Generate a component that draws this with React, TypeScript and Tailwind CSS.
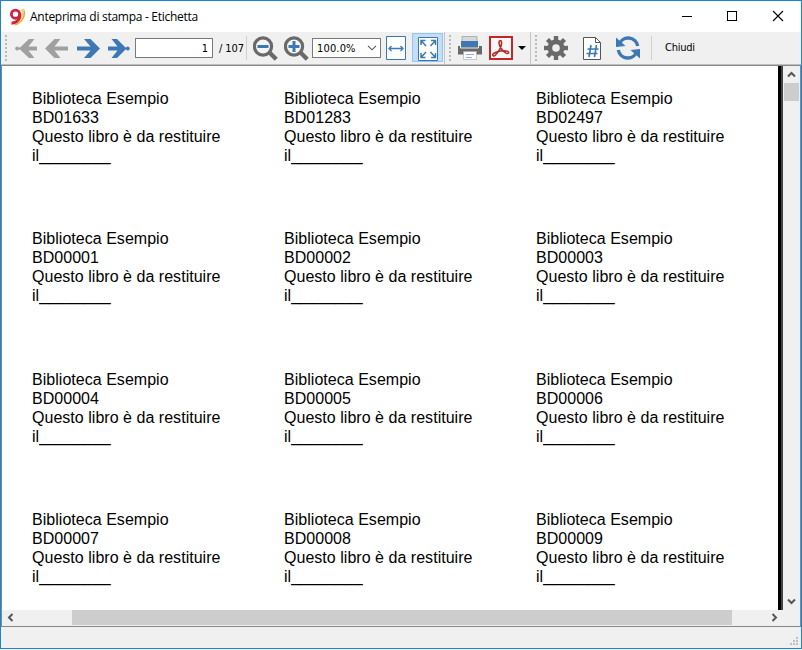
import React from "react";

const codes = [
  ["BD01633", "BD01283", "BD02497"],
  ["BD00001", "BD00002", "BD00003"],
  ["BD00004", "BD00005", "BD00006"],
  ["BD00007", "BD00008", "BD00009"],
];
const rowHeights = ["h-[140px]", "h-[141px]", "h-[140px]", "h-[100px]"];

function Icon({ x, w, y = 34, h = 28, children, className = "" }: { x: number; w: number; y?: number; h?: number; children: React.ReactNode; className?: string }) {
  return (
    <svg width={w} height={h} viewBox={`${x} ${y} ${w} ${h}`} className={`shrink-0 ${className}`}>
      {children}
    </svg>
  );
}

function Grip() {
  return (
    <div className="flex h-[28px] w-[3px] shrink-0 flex-col gap-[2px] pt-px">
      {[0, 1, 2, 3, 4, 5, 6].map((i) => (
        <div key={i} className="h-[2px] w-[2px] bg-[#bababa]" />
      ))}
    </div>
  );
}

function Lens({ x, plus }: { x: number; plus?: boolean }) {
  return (
    <Icon x={x} w={25}>
      <circle cx={x + 10} cy="46.5" r="8.6" fill="#f5f5f5" stroke="#696969" strokeWidth="3.2" />
      <path d={`M${x + 17} 53l4.700 4.700`} stroke="#696969" strokeWidth="4.300" strokeLinecap="square" />
      <path d={`M${x + 4.5} 46.5h11`} stroke="#3c78b4" strokeWidth="3" />
      {plus && <path d={`M${x + 10} 41v11`} stroke="#3c78b4" strokeWidth="3" />}
    </Icon>
  );
}

function TitleBar() {
  return (
    <div className="flex h-[31px] shrink-0 items-center bg-white font-['Open_Sans','Noto_Sans',sans-serif] text-[12px] text-black">
      <Icon x={8} y={6} w={19} h={18} className="ml-[7px]">
        <path d="M22.5 7C25.5 14 21 20.500 14 22" fill="none" stroke="#f1d875" strokeWidth="3.6" />
        <path d="M24.300 9C25 15 21.500 20.500 15.500 22.700" fill="none" stroke="#b39a45" strokeWidth=".8" />
        <circle cx="15.500" cy="12.200" r="4.100" fill="#fff" stroke="#d5203e" strokeWidth="2.800" />
        <path d="M19.700 11.500C20.500 16.500 17.500 20.700 11.500 21.200" fill="none" stroke="#d5203e" strokeWidth="2.900" />
      </Icon>
      <span className="ml-[3px] w-[220px] whitespace-nowrap tracking-[-0.28px]">Anteprima di stampa - Etichetta</span>
      <Icon x={680} y={8} w={110} h={16} className="ml-auto mr-[11px]">
        <g fill="none" stroke="#000">
          <path d="M682 15.500h10M727.500 10.500h9v9h-9z" shapeRendering="crispEdges" />
          <path d="M773 10l10 10M783 10l-10 10" strokeWidth="1.100" />
        </g>
      </Icon>
    </div>
  );
}

function Toolbar() {
  return (
    <div className="flex h-[32px] shrink-0 items-center bg-[#f0f0f0] font-['DejaVu_Sans_Condensed','DejaVu_Sans',sans-serif] text-[11px] text-black">
      <div className="ml-[4px] flex"><Grip /></div>
      <Icon x={15} w={22} className="ml-[7px]">
        <path d="M37 46.500H28.500L34.500 39H29L20 47.500h-1.200a1.900 1.900 0 1 0 0 2H20L29 58h5.500l-6-7.500H37z" fill="#a0a0a0" />
      </Icon>
      <Icon x={45} w={24} className="ml-[8px]">
        <path d="M68 46.500H54.500l6-7.500h-6L45 48.500 54.500 58h6l-6-7.500H68z" fill="#a0a0a0" />
      </Icon>
      <Icon x={77} w={24} className="ml-[8px]">
        <path d="M77 46.500H90.500L84 39h6.500L100 48.500 90.500 58H84l6.500-7.500H77z" fill="#3c78b4" />
      </Icon>
      <Icon x={108} w={23} className="ml-[7px]">
        <path d="M108 46.500h9.500L111.500 39h5.500l8.500 8.500h.7a1.900 1.900 0 1 1 0 2h-.7L117 58h-5.500l6-7.500H108z" fill="#3c78b4" />
      </Icon>
      <div className="ml-[4px] flex h-[20px] w-[78px] items-center justify-end border border-[#7a7a7a] bg-white pr-[4px] pt-[2px]">1</div>
      <div className="ml-[6px] w-[26px] whitespace-nowrap pt-[2px] tracking-[-0.1px]">/ 107</div>
      <div className="ml-[1px] h-[24px] w-px bg-[#d0d0d0]" />
      <div className="ml-[6px] flex"><Lens x={253} /></div>
      <div className="ml-[6px] flex"><Lens x={284} plus /></div>
      <div className="ml-[3px] flex h-[20px] w-[69px] items-center justify-between border border-[#7a7a7a] bg-white pl-[4px] pr-[3px]">
        <span className="pt-[2px] tracking-[0.15px]">100.0%</span>
        <svg width="10" height="6" viewBox="0 0 10 6"><path d="M1 .8l4 4 4-4" fill="none" stroke="#555" strokeWidth="1.100" /></svg>
      </div>
      <Icon x={386} w={20} className="ml-[5px]">
        <path d="M386.500 36.500h19v23h-19z" fill="#fff" stroke="#3c78b4" />
        <path d="M389 48.500h14M391.500 46l-2.500 2.500 2.500 2.500M400.500 46l2.500 2.500-2.500 2.500" fill="none" stroke="#3c78b4" strokeWidth="1.300" />
      </Icon>
      <Icon x={412} y={33} w={31} h={30} className="ml-[6px]">
        <path d="M412.500 33.500h30v28h-30z" fill="#c3def5" stroke="#91c6f4" />
        <path d="M418.500 37.500h19v23h-19z" fill="#fff" stroke="#3c78b4" />
        <path d="M421 45v-4.500h4.500M421 40.500l5 5.500M431 40.500h4.500V45M435.500 40.500l-5 5.500M421 53v4.500h4.500M421 57.500l5-5.500M431 57.500h4.500V53M435.500 57.500l-5-5.500" fill="none" stroke="#3c78b4" strokeWidth="1.500" />
      </Icon>
      <div className="ml-[1px] h-[32px] w-px bg-[#c5c5c5]" />
      <div className="ml-[4px] flex"><Grip /></div>
      <Icon x={458} w={24} className="ml-[6px]">
        <path d="M462 36.500h15v6h-15z" fill="#d8d8d8" stroke="#999" strokeWidth=".7" />
        <path d="M458 46h24v8.500h-24z" fill="#696969" />
        <path d="M461 41h17v6h-17z" fill="#3c78b4" />
        <path d="M460.500 46v2h18v-2" fill="none" stroke="#eee" />
        <path d="M463.500 51.500h13v8h-13z" fill="#fff" stroke="#aaa" strokeWidth=".6" />
        <path d="M466 54.500h8M466 57.500h6" stroke="#8daed0" />
      </Icon>
      <Icon x={489} w={24} className="ml-[7px]">
        <path d="M490 37h22v22h-22z" fill="#f8f8f8" stroke="#c62525" strokeWidth="2" />
        <path d="M499 42.500c0-2.500 2.600-2.500 2.600 0 0 4.500-3.200 9.500-6.100 12.500-2 2-3.800.2-2-1.500 3.500-2.200 10-3.500 14-2.300 2.300 1.300.7 3-1.500 1.900-3.500-2-7-6.600-7-10.600z" fill="none" stroke="#b62d2d" strokeWidth="1.600" />
      </Icon>
      <Icon x={517} w={12} className="ml-[4px]"><path d="M518 46h8l-4 4z" fill="#000" /></Icon>
      <div className="ml-[1px] h-[32px] w-px bg-[#c5c5c5]" />
      <div className="ml-[4px] flex"><Grip /></div>
      <Icon x={544} w={24} className="ml-[6px]">
        <g fill="#696969">
          {[0, 45, 90, 135].map((a) => (
            <path key={a} d="M553.800 36h4.400v24h-4.400z" transform={`rotate(${a} 556 48)`} />
          ))}
          <circle cx="556" cy="48" r="8.500" />
        </g>
        <circle cx="556" cy="48" r="3.800" fill="#f0f0f0" />
      </Icon>
      <Icon x={583} w={18} className="ml-[15px]">
        <path d="M583.500 37.500h12l5 5v17h-17z" fill="#fff" stroke="#555" />
        <path d="M595.500 37.500v5h5" fill="none" stroke="#555" />
        <path d="M591 45l-2 12M596.500 45l-2 12M587.500 49h11M586.500 53.500h11" stroke="#3c78b4" strokeWidth="1.600" />
      </Icon>
      <Icon x={615} w={26} className="ml-[14px]">
        <path d="M619 44.500a9.700 9.700 0 0 1 18.700 1.500M637 51.500a9.700 9.700 0 0 1-18.700-1.500" fill="none" stroke="#3c78b4" strokeWidth="3.400" />
        <path d="M616 37.500v9.500l9.500-1zM640 58.500v-9.500l-9.500 1z" fill="#3c78b4" />
      </Icon>
      <div className="ml-[10px] h-[24px] w-px bg-[#d0d0d0]" />
      <span className="ml-[13px] pt-px tracking-[-0.25px]">Chiudi</span>
    </div>
  );
}

function Chevron({ d }: { d: string }) {
  return (
    <svg width="9" height="9" viewBox="0 0 9 9" className="shrink-0">
      <path d={d} fill="none" stroke="#555" strokeWidth="2" />
    </svg>
  );
}

export default function App() {
  return (
    <div className="flex h-[649px] w-[802px] flex-col overflow-hidden border border-[#1883d7] bg-[#f0f0f0]">
      <TitleBar />
      <Toolbar />
      <div className="h-px shrink-0 bg-[#bdbdbd]" />
      <div className="flex h-[562px] shrink-0 flex-col border border-[#828790] bg-[#f0f0f0]">
        <div className="flex h-[544px] shrink-0">
          <div className="w-[776px] shrink-0 overflow-hidden bg-white pl-[30px] pt-[23px] font-['Liberation_Sans',Arial,sans-serif] text-[16px] leading-[19px] tracking-[0.03px] text-black">
            {codes.map((row, r) => (
              <div key={r} className={`flex ${rowHeights[r]}`}>
                {row.map((code) => (
                  <div key={code} className="w-[252px] shrink-0 whitespace-nowrap">
                    <p>Biblioteca Esempio</p>
                    <p>{code}</p>
                    <p>Questo libro è da restituire</p>
                    <p>il________</p>
                  </div>
                ))}
              </div>
            ))}
          </div>
          <div className="w-[5px] shrink-0 border-r-2 border-[#444] bg-black" />
          <div className="flex w-[17px] shrink-0 flex-col items-center pt-[4px]">
            <Chevron d="M1 6.500l3.500-3.500L8 6.500" />
            <div className="mt-[4px] h-[18px] w-[15px] shrink-0 bg-[#cdcdcd]" />
            <div className="mb-[4px] mt-auto flex"><Chevron d="M1 2.500L4.500 6 8 2.500" /></div>
          </div>
        </div>
        <div className="flex h-[15px] shrink-0 items-center pl-[4px]">
          <Chevron d="M6.500 1L3 4.500 6.500 8" />
          <div className="ml-[57px] h-[15px] w-[660px] bg-[#cdcdcd]" />
          <div className="ml-[38px] flex"><Chevron d="M2.500 1L6 4.500 2.500 8" /></div>
        </div>
      </div>
      <div className="flex h-[20px] items-end justify-end pb-[2px] pr-[3px]">
        <svg width="8" height="8" viewBox="0 0 8 8" shapeRendering="crispEdges">
          <path d="M6 0h2v2H6zM3 3h2v2H3zM6 3h2v2H6zM0 6h2v2H0zM3 6h2v2H3zM6 6h2v2H6z" fill="#bfbfbf" />
        </svg>
      </div>
    </div>
  );
}
